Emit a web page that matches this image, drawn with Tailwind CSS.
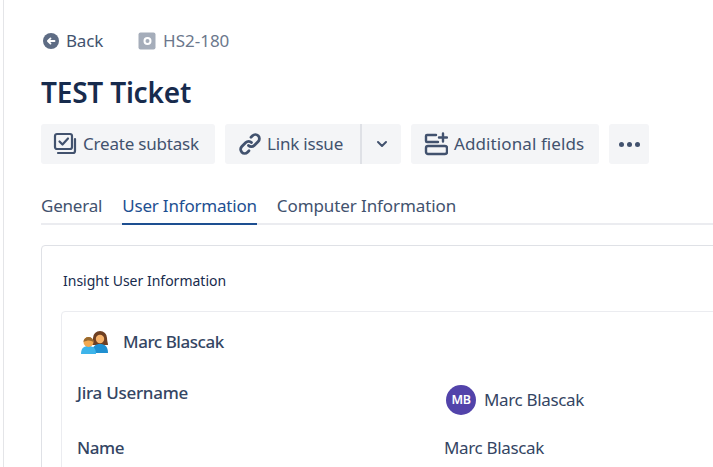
<!DOCTYPE html>
<html lang="en">
<head>
    <meta charset="UTF-8">
    <title>TEST Ticket</title>
    <script src="https://cdn.jsdelivr.net/npm/@tailwindcss/browser@4"></script>
</head>
<body class="bg-white h-[467px] w-[713px] overflow-hidden font-['Noto_Sans',sans-serif] text-[#42526e] tracking-[-0.2px]">
    <div class="ml-[3px] border-l border-[#e4e5e8] h-[467px] overflow-hidden pl-[37px] pt-[28px]">
        <!-- breadcrumb -->
        <div class="flex items-center h-[26px]">
            <svg class="w-[18px] h-[18px] mr-[6px] ml-[1px]" viewBox="0 0 18 18">
                <circle cx="9" cy="9" r="8" fill="#5e6c84"/>
                <path d="M12.500 9H6M8.500 6.400 5.900 9l2.600 2.600" fill="none" stroke="#fff" stroke-width="1.800" stroke-linecap="round" stroke-linejoin="round"/>
            </svg>
            <span class="text-[17px]">Back</span>
            <svg class="w-[18px] h-[18px] ml-[35px] mr-[7px]" viewBox="0 0 18 18">
                <rect x="0.500" y="0.500" width="17" height="17" rx="2" fill="#a5adba"/>
                <circle cx="9.500" cy="9" r="3" fill="none" stroke="#fff" stroke-width="2"/>
            </svg>
            <span class="text-[17px] text-[#6b778c] tracking-[0px]">HS2-180</span>
        </div>

        <h1 class="text-[28px] leading-[36px] font-semibold text-[#172b4d] mt-[20px] tracking-[-0.2px]">TEST Ticket</h1>

        <!-- actions -->
        <div class="flex items-center mt-[14px] h-[40px] text-[17px]">
            <button class="flex items-center h-[40px] w-[174px] bg-[#f4f5f7] rounded-[3px] pl-[12px]">
                <svg class="w-[24px] h-[24px] mr-[6px]" viewBox="0 0 24 24" fill="none" stroke="#42526e" stroke-width="2.200" stroke-linecap="round" stroke-linejoin="round">
                    <rect x="2" y="2" width="17" height="15" rx="2"/>
                    <path d="M6.500 9.500l3 3 5.500-6"/>
                    <path d="M5 21h15a2 2 0 0 0 2-2V7"/>
                </svg>
                <span>Create subtask</span>
            </button>
            <button class="flex items-center h-[40px] w-[135px] ml-[10px] bg-[#f4f5f7] rounded-l-[3px] pl-[13px]">
                <svg class="w-[24px] h-[24px] mr-[5px]" viewBox="0 0 24 24" fill="none" stroke="#42526e" stroke-width="2.800" stroke-linecap="round">
                    <path d="M10.500 13.500a4 4 0 0 0 5.700 0l4-4a4 4 0 0 0-5.700-5.700l-1.500 1.500"/>
                    <path d="M13.500 10.500a4 4 0 0 0-5.700 0l-4 4a4 4 0 0 0 5.700 5.700l1.500-1.500"/>
                </svg>
                <span>Link issue</span>
            </button>
            <button class="flex items-center justify-center h-[40px] w-[41px] border-l-2 border-[#dfe1e6] bg-[#f4f5f7] rounded-r-[3px]">
                <svg class="w-[12px] h-[12px]" viewBox="0 0 12 12" fill="none" stroke="#42526e" stroke-width="2" stroke-linecap="round" stroke-linejoin="round">
                    <path d="M2 4l4 4 4-4"/>
                </svg>
            </button>
            <button class="flex items-center h-[40px] w-[188px] ml-[10px] bg-[#f4f5f7] rounded-[3px] pl-[13px]">
                <svg class="w-[24px] h-[24px] mr-[6px]" viewBox="0 0 24 24" fill="none" stroke="#42526e" stroke-width="2.400" stroke-linecap="round" stroke-linejoin="round">
                    <path d="M14 10H3a1 1 0 0 1-1-1V4a1 1 0 0 1 1-1h9"/>
                    <rect x="2" y="14" width="21" height="8" rx="2"/>
                    <path d="M19 1.500v8M15 5.500h8"/>
                </svg>
                <span class="tracking-[0.1px]">Additional fields</span>
            </button>
            <button class="flex items-center justify-center gap-[3px] h-[40px] w-[40px] ml-[10px] bg-[#f4f5f7] rounded-[3px]">
                <span class="w-[5px] h-[5px] rounded-full bg-[#42526e]"></span>
                <span class="w-[5px] h-[5px] rounded-full bg-[#42526e]"></span>
                <span class="w-[5px] h-[5px] rounded-full bg-[#42526e]"></span>
            </button>
        </div>

        <!-- tabs -->
        <div class="flex mt-[16px] h-[45px] border-b-2 border-[#ebecf0] text-[17px]">
            <div class="h-[45px] pt-[14px] leading-[24px]">General</div>
            <div class="h-[45px] pt-[14px] leading-[24px] ml-[20px] text-[#1d4f91] border-b-2 border-[#1d4f91]">User Information</div>
            <div class="h-[45px] pt-[14px] leading-[24px] ml-[20px] tracking-[-0.1px]">Computer Information</div>
        </div>

        <!-- panel -->
        <div class="mt-[20px] w-[700px] h-[300px] border border-[#dfe1e6] rounded-[4px] pl-[19px] pt-[25px]">
            <div class="ml-[2px] text-[14px] leading-[20px] text-[#172b4d] tracking-[0px]">Insight User Information</div>
            <div class="mt-[20px] w-[680px] h-[200px] border border-[#ebecf0] rounded-[4px] pl-[15px]">
                <div class="flex items-center h-[60px]">
                    <svg class="w-[30px] h-[30px] ml-[3px] mr-[13px]" viewBox="0 0 30 30">
                        <path d="M13 11a7 7 0 0 1 14 0c0 3 1 5 1 7H12c0-2 1-4 1-7z" fill="#6e3f22"/>
                        <path d="M12 26c0-7 3.500-9 8-9s8 2 8 9z" fill="#1f8fd0"/>
                        <circle cx="20" cy="12" r="4.200" fill="#f6b26b"/>
                        <path d="M1 27c0-6 3-8 7.500-8s7.500 2 7.500 8z" fill="#3db4ea"/>
                        <circle cx="8.500" cy="15" r="5" fill="#f3a950"/>
                        <path d="M3.500 15a5 5 0 0 1 10 0c-3-2-6-2-10 0z" fill="#9a6a2f"/>
                    </svg>
                    <span class="text-[17px] font-medium tracking-[-0.45px] text-[#344563]">Marc Blascak</span>
                </div>
                <div class="flex h-[58px]">
                    <div class="w-[368px] pt-[9px] text-[17px] leading-[24px] font-medium tracking-[-0.27px] text-[#344563]">Jira Username</div>
                    <div class="flex items-center h-[38px] mt-[9px] ml-[1px] text-[17px] text-[#344563] tracking-[-0.35px]">
                        <span class="flex items-center justify-center w-[30px] h-[30px] rounded-full bg-[#5243aa] text-white text-[12.500px] font-semibold mr-[8px]">MB</span>
                        Marc Blascak
                    </div>
                </div>
                <div class="flex h-[40px]">
                    <div class="w-[367px] pt-[6px] text-[17px] leading-[24px] font-medium tracking-[-0.4px] text-[#344563]">Name</div>
                    <div class="pt-[6px] text-[17px] leading-[24px] text-[#344563] tracking-[-0.35px]">Marc Blascak</div>
                </div>
            </div>
        </div>
    </div>
</body>
</html>
